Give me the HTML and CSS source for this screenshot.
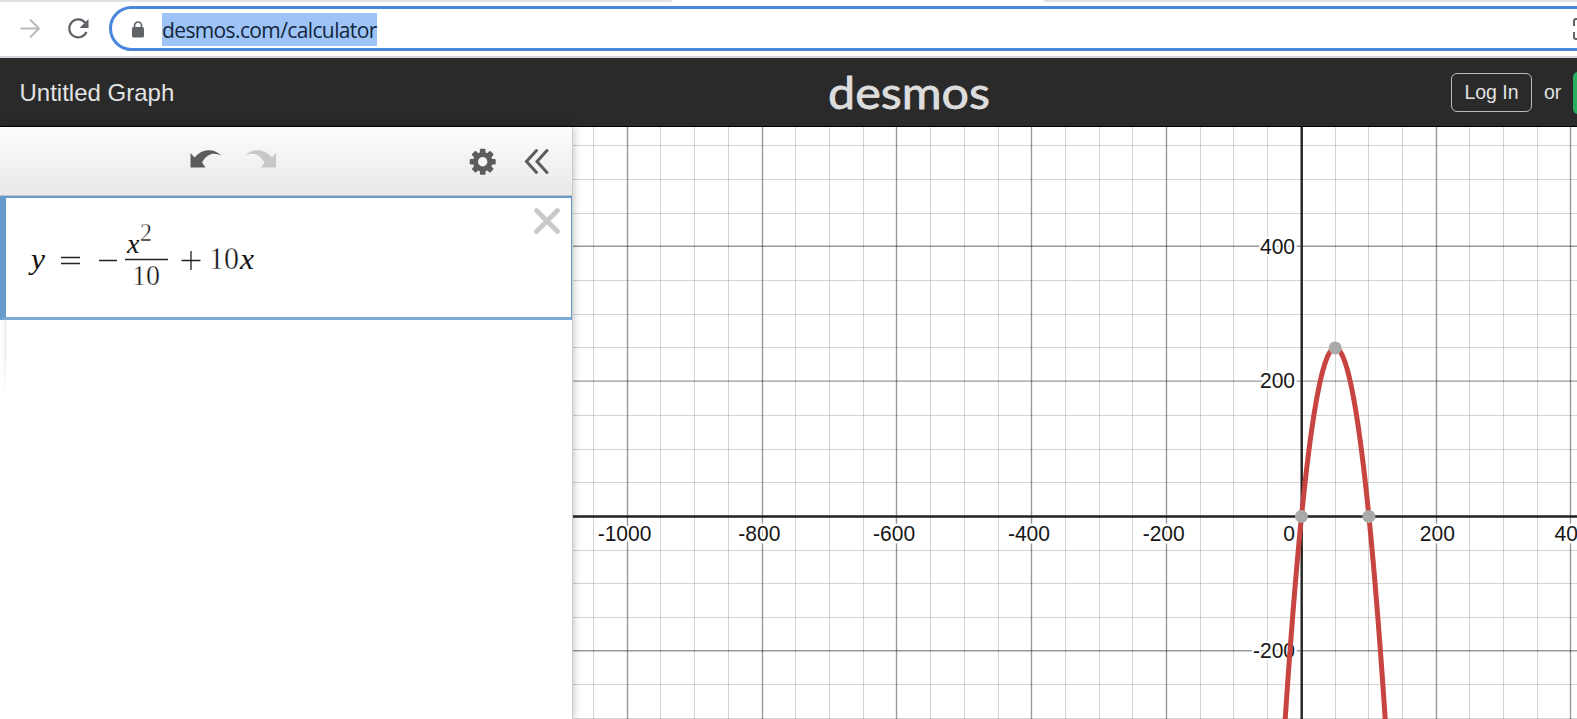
FILE: index.html
```html
<!DOCTYPE html>
<html lang="en">
<head>
<meta charset="utf-8">
<title>Desmos | Graphing Calculator</title>
<link rel="stylesheet" href="styles.css">
</head>
<body>
<div class="browser">
  <div class="tabstrip"><i class="tab-left"></i><i class="tab-active"></i><i class="tab-right"></i></div>
  <div class="navbar">
    <svg class="nav-icons" width="109" height="50" viewBox="0 6 109 50" fill="none">
      <path d="M20.500 28.500H38M30 19.500l9 9-9 9" stroke="#b9bbbd" stroke-width="2"/>
      <path d="M85.500 23A9 9 0 1 0 86.500 32" stroke="#5f6368" stroke-width="2.200"/>
      <path d="M88.500 19v9h-9z" fill="#5f6368"/>
    </svg>
    <div class="omnibox">
      <svg class="lock" width="14" height="18" viewBox="0 0 14 18"><path d="M3.500 7V4.500a3.500 3.500 0 0 1 7 0V7" fill="none" stroke="#5f6368" stroke-width="1.700"/><rect x="1" y="6" width="12" height="10.500" rx="1.500" fill="#5f6368"/></svg>
      <span class="url">desmos.com/calculator</span>
      <svg class="scan" width="5" height="24" viewBox="0 0 5 24" fill="none" stroke="#5f6368" stroke-width="2"><path d="M5 2H3Q1 2 1 4v5M1 15v5q0 2 2 2h2"/></svg>
    </div>
  </div>
</div>
<header class="header">
  <div class="graph-title">Untitled Graph</div>
  <svg class="logo" width="170" height="50" viewBox="0 0 170 50"><text x="3" y="41.500" textLength="162" lengthAdjust="spacingAndGlyphs">desmos</text></svg>
  <div class="account"><span class="login">Log In</span><span class="or">or</span><span class="signup"></span></div>
</header>
<main class="main">
  <section class="panel">
    <div class="toolbar">
      <svg width="572" height="68" viewBox="0 127 572 68">
        <path d="M190.500 153l4 4.500c7-9 20-10 27-1.500-7-4-14-3-19.500 6.500l3.500 5h-15z" fill="#5c5c5c"/>
        <path d="M276 153l-4 4.500c-7-9-20-10-27-1.500 7-4 14-3 19.500 6.500l-3.500 5h15z" fill="#c8c8c8"/>
        <g transform="translate(482.700 161.700)" fill="#5c5c5c">
          <g id="teeth"><rect x="-2.800" y="-13" width="5.600" height="26" rx="1"/><rect x="-13" y="-2.800" width="26" height="5.600" rx="1"/></g>
          <use href="#teeth" transform="rotate(45)"/>
          <circle r="9.800"/><circle r="4.700" fill="#f3f3f3"/>
        </g>
        <path d="M536.500 150.500l-10 11 10 11M547 150.500l-10 11 10 11" fill="none" stroke="#5c5c5c" stroke-width="3" stroke-linecap="round"/>
      </svg>
    </div>
    <div class="expression">
      <svg class="formula" width="300" height="118" viewBox="6 198 300 118">
        <g class="math">
          <text class="var" x="31" y="269" font-size="29" textLength="14" lengthAdjust="spacingAndGlyphs">y</text>
          <path d="M61 257.500h19M61 263.500h19M99 260.500h18M181.500 260.500h19M191 251v19"/>
          <text class="var" x="127" y="253" font-size="28">x</text>
          <text x="140" y="241" font-size="26" textLength="12" lengthAdjust="spacingAndGlyphs">2</text>
          <path d="M125 259.500h43"/>
          <text x="132" y="284.500" font-size="29.500" textLength="28" lengthAdjust="spacingAndGlyphs">10</text>
          <text x="209" y="269" font-size="31.500" textLength="30" lengthAdjust="spacingAndGlyphs">10</text>
          <text class="var" x="240" y="269" font-size="30" textLength="14" lengthAdjust="spacingAndGlyphs">x</text>
        </g>
      </svg>
      <svg class="delete" width="30" height="30" viewBox="0 0 30 30"><path d="M4.500 4.500l21 21M25.500 4.500l-21 21" stroke="#c9c9c9" stroke-width="4.800" stroke-linecap="round"/></svg>
    </div>
    <div class="gutter"></div>
  </section>
  <svg class="graph" id="graph" width="1005" height="592" viewBox="572 127 1005 592"></svg>
</main>
<script src="graph.js"></script>
</body>
</html>
```
FILE: styles.css
```css
* { box-sizing: border-box; }
body { margin: 0; width: 1577px; height: 719px; overflow: hidden; background: #fff; font-family: "Liberation Sans", Arial, sans-serif; }
svg { display: block; flex: none; }
.browser { height: 58px; border-bottom: 2px solid #d5d9df; }
.tabstrip { display: flex; height: 2px; }
.tab-left { width: 672px; background: #dee1e6; border-radius: 0 0 4px 0; }
.tab-active { width: 371px; }
.tab-right { flex: 1; background: #dee1e6; border-radius: 0 0 0 4px; }
.navbar { display: flex; height: 54px; padding-top: 4px; }
.omnibox { display: flex; width: 1500px; flex: none; height: 45px; border: 3px solid #4a86db; border-radius: 23px; padding-left: 19px; }
.lock { margin-top: 12px; }
.url { margin: 4px 0 0 17px; width: 215px; height: 33px; line-height: 34px; background: #9dc3f7; color: #14263c; font-family: "Open Sans", "Noto Sans", sans-serif; font-size: 21px; white-space: nowrap; letter-spacing: -.62px; }
.scan { margin: 8px 0 0 1196px; }
.header { display: grid; grid-template-columns: 825px 626px 126px; height: 69px; background: #2a2a2a; border-bottom: 1px solid #000; color: #e2e2e2; }
.graph-title { padding-left: 19.500px; font-size: 24px; line-height: 69px; }
.logo { margin-top: 9px; }
.logo text { font-family: Lato, sans-serif; font-size: 45px; fill: #ddd; stroke: #ddd; stroke-width: .8px; stroke-linejoin: round; }
.account { display: flex; margin-top: 15px; font-size: 19.500px; line-height: 37px; white-space: nowrap; }
.login { width: 81px; flex: none; height: 39px; border: 1px solid #bbb; border-radius: 6px; text-align: center; }
.or { margin-left: 12px; width: 17px; flex: none; line-height: 39px; }
.signup { margin-left: 12px; width: 60px; flex: none; height: 42px; margin-top: -1px; border-radius: 5px; background: #27ae60; }
.main { display: flex; height: 592px; }
.panel { width: 573px; margin-right: -1px; flex: none; background: #fff; box-shadow: 0 0 9px rgba(0,0,0,.28); z-index: 1; border-right: 1px solid #ccc; }
.toolbar { height: 69px; background: linear-gradient(#fcfcfc, #e9e9e9); border-bottom: 1px solid #c6c6c6; overflow: hidden; }
.expression { display: flex; justify-content: space-between; height: 124px; width: 572px; border: 2px solid #6699cc; border-right-width: 1px; border-left-width: 6px; border-bottom: 3px solid #7eabd5; }
.delete { margin: 8px 9px 0 0; }
.math { fill: #111; font-family: "Liberation Serif", "Times New Roman", serif; }
.math text { stroke: #fff; stroke-width: .45px; }
.math path { stroke: #222; stroke-width: 1.300px; }
.math .var { font-style: italic; stroke: none; }
.gutter { width: 6px; height: 75px; border-right: 1px solid #e6e6e6; background: linear-gradient(90deg, #fff, #f5f5f5); mask-image: linear-gradient(#000 40%, transparent); }
.minor { stroke: #000; stroke-opacity: .17; }
.major { stroke: #000; stroke-opacity: .4; stroke-width: 1.400px; }
.axis { stroke: #222; stroke-width: 2.400px; }
.label { font-size: 22px; fill: #161616; stroke: #fff; stroke-width: 5px; paint-order: stroke; stroke-linejoin: round; }
.curve { fill: none; stroke: #c74440; stroke-width: 5px; }
.point { fill: #aaa; }
```
FILE: graph.js
```js
const originX = 1301.5, originY = 516.4, step = 33.7;
const parts = [];
const toX = v => originX + v * step / 50;
const toY = v => originY - v * step / 50;
const snap = v => Math.floor(v) + 0.5;

for (const kind of ['minor', 'major']) {
  for (let i = -22; i <= 12; i++) {
    if (i === 0 || (i % 4 === 0) !== (kind === 'major')) continue;
    const x = snap(originX + i * step - 0.2);
    const y = kind === 'major' ? originY + i * step - 0.5 : snap(originY + i * step);
    if (x > 572) parts.push(`<path class="${kind}" d="M${x} 127V719"/>`);
    if (y > 127 && y < 719) parts.push(`<path class="${kind}" d="M572 ${y}H1577"/>`);
  }
}
parts.push('<path class="axis" d="M1301.700 127V719M572 516.500H1577"/>');

// Tick labels are set slightly condensed.
const label = (x, y, text, anchor) =>
  parts.push(`<text class="label" transform="translate(${x} ${y}) scale(.955 1)" text-anchor="${anchor}">${text}</text>`);
for (let v = -1000; v <= 400; v += 200) {
  if (v) label(toX(v) + (v < 0 ? -3 : 1), 541, v, 'middle');
}
label(1295, 541, '0', 'end');
for (const v of [400, 200, -200]) label(1295, toY(v) + 6.800, v, 'end');

let d = '';
for (let x = -30; x <= 130; x++) d += `${d ? 'L' : 'M'}${toX(x)} ${toY(-x * x / 10 + 10 * x)}`;
parts.push(`<path class="curve" d="${d}"/>`);
for (const [x, y] of [[0, 0], [50, 250], [100, 0]]) {
  parts.push(`<circle class="point" cx="${toX(x)}" cy="${toY(y)}" r="6.500"/>`);
}
document.getElementById('graph').innerHTML = parts.join('');
```
